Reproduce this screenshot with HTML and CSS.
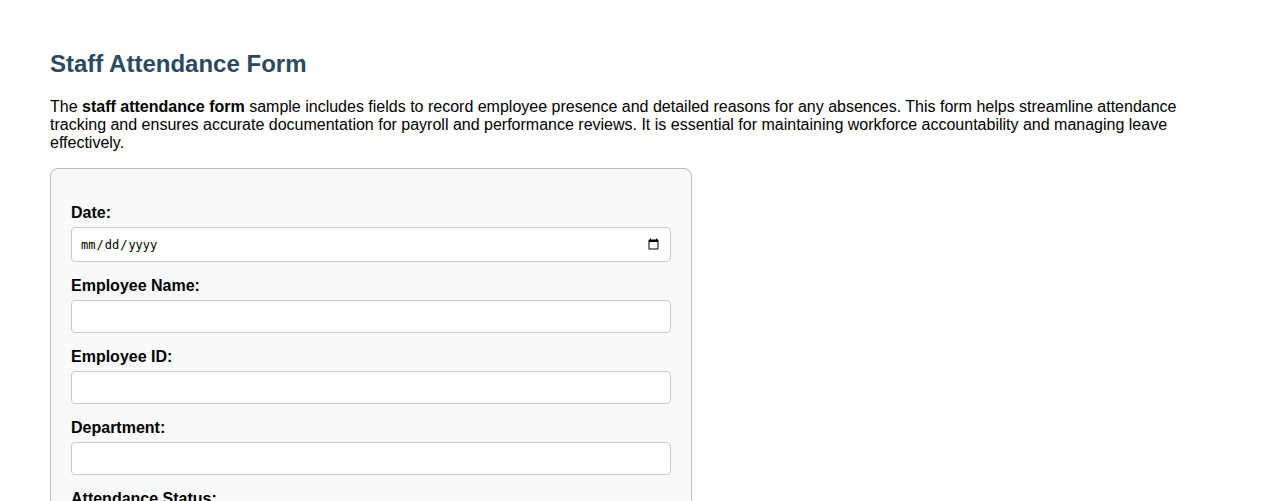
FILE: index.html
```html
<!DOCTYPE html>
<html lang="en">
<head>
    <meta charset="UTF-8" />
    <meta name="viewport" content="width=device-width, initial-scale=1.0" />
    <title>Staff Attendance Form</title>
    <link rel="stylesheet" href="styles.css">
</head>
<body>
    <h2 class="title">Staff Attendance Form</h2>
    <p class="intro">The <strong>staff attendance form</strong> sample includes fields to record employee presence and detailed reasons for any absences. This form helps streamline attendance tracking and ensures accurate documentation for payroll and performance reviews. It is essential for maintaining workforce accountability and managing leave effectively.</p>
    <form class="form-box">
        <label for="date">Date:</label>
        <input type="date" id="date">
        <label for="name">Employee Name:</label>
        <input type="text" id="name">
        <label for="empid">Employee ID:</label>
        <input type="text" id="empid">
        <label for="dept">Department:</label>
        <input type="text" id="dept">
        <label for="status">Attendance Status:</label>
        <select id="status">
            <option>Present</option>
            <option>Absent</option>
        </select>
    </form>
</body>
</html>
```

FILE: styles.css
```css
body {
    font-family: "Liberation Sans", Arial, sans-serif;
    font-size: 16px;
    line-height: 18px;
    color: #000;
    background-color: #fff;
    margin: 0;
    padding: 50px;
}

.title {
    font-size: 24px;
    line-height: 28px;
    color: #2c4a5e;
    margin: 0 0 20px;
}

.intro {
    margin: 0 0 16px;
}

.form-box {
    width: 600px;
    padding: 20px;
    background-color: #f8f9fa;
    border: 1px solid #bbb;
    border-radius: 8px;
}

label {
    display: block;
    font-weight: bold;
    margin: 15px 0 5px;
}

input, select {
    display: block;
    box-sizing: border-box;
    width: 100%;
    padding: 8px;
    margin-bottom: 10px;
    background-color: #fff;
    border: 1px solid #ccc;
    border-radius: 4px;
}

input[type="text"] {
    height: 33px;
}

input[type="date"] {
    height: 35px;
    font-family: "DejaVu Sans Mono", monospace;
    font-size: 12px;
}

input[type="date"]::-webkit-calendar-picker-indicator {
    font-size: 13.33px;
}
```
